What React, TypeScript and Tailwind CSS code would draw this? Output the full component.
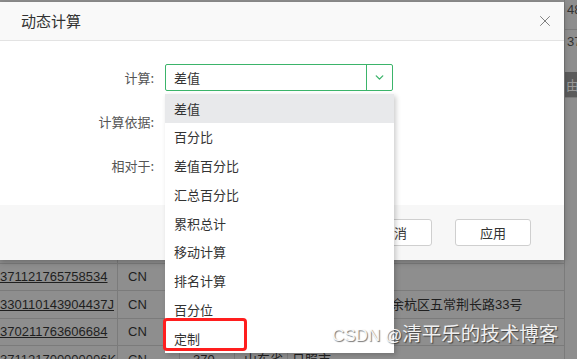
import { ChevronDown, X } from 'lucide-react';

const rows = [
  { id: '370211763600012', cn: 'CN', code: '370', prov: '山东省', city: '青岛市', addr: '' },
  { id: '371121765758534', cn: 'CN', code: '371', prov: '山东省', city: '日照市', addr: '' },
  { id: '330110143904437J', cn: 'CN', code: '330', prov: '浙江省', city: '杭州市', addr: '杭州市余杭区五常荆长路33号' },
  { id: '370211763606684', cn: 'CN', code: '370', prov: '山东省', city: '青岛市', addr: '' },
  { id: '371121700000006K', cn: 'CN', code: '370', prov: '山东省', city: '日照市', addr: '' },
];

const options = ['差值', '百分比', '差值百分比', '汇总百分比', '累积总计', '移动计算', '排名计算', '百分位', '定制'];

const font = "font-['Noto_Sans_CJK_SC','Noto_Sans',sans-serif]";

export default function App() {
  return (
    <div className={`relative w-[577px] h-[359px] overflow-hidden bg-[#8e8e8e] ${font}`}>
      {/* 背景表格 */}
      <div className="flex h-full">
        <div className="flex-1 flex flex-col pt-[236px]">
          {rows.map((r) => (
            <div key={r.id} className="flex h-[27.6px] shrink-0 border-b border-[#7b7b7b] text-[13px] text-[#1f1f1f] font-['Liberation_Sans','Noto_Sans_CJK_SC',sans-serif]">
              <div className="w-[118px] shrink-0 border-r border-[#7b7b7b] flex items-center underline overflow-hidden whitespace-nowrap">{r.id}</div>
              <div className="w-[62px] shrink-0 border-r border-[#7b7b7b] flex items-center pl-[10px]">{r.cn}</div>
              <div className="w-[55px] shrink-0 border-r border-[#7b7b7b] flex items-center pl-[13px] overflow-hidden">{r.code}</div>
              <div className="w-[53px] shrink-0 border-r border-[#7b7b7b] flex items-center pl-[9px] overflow-hidden whitespace-nowrap">{r.prov}</div>
              <div className="w-[52px] shrink-0 flex items-center pl-[4px] overflow-hidden whitespace-nowrap">{r.city}</div>
              <div className="flex-1 flex items-center pl-[12px] whitespace-nowrap overflow-hidden">{r.addr}</div>
            </div>
          ))}
        </div>
        <div className="w-[13px] shrink-0 border-l border-[#7b7b7b] flex flex-col text-[13px] text-[#333] font-['Liberation_Sans',sans-serif] overflow-hidden">
          <div className="h-[30px] shrink-0 border-b border-[#7b7b7b] pl-[2px] pt-[2px] leading-[16px] whitespace-nowrap">48</div>
          <div className="h-[30px] shrink-0 pl-[2px] pt-[4px] leading-[16px] whitespace-nowrap">37</div>
          <div className="h-[12px] shrink-0" />
          <div className="h-[25px] shrink-0 bg-[#5b5b5b] text-[#9a9a9a] pl-[1px] flex items-center font-['Noto_Sans_CJK_SC',sans-serif]">由</div>
          <div className="flex-1 border-t border-[#7b7b7b]" />
        </div>
      </div>

      {/* 弹窗 */}
      <div className="absolute left-0 top-[2px] w-[564px] h-[258px] flex flex-col bg-white shadow-[0_2px_6px_rgba(0,0,0,0.25)]">
        <div className="h-[39px] shrink-0 flex items-center justify-between pl-[21px] pr-[10px] bg-[#f9f9f9] border-b border-[#e3e3e3]">
          <span className="text-[15px] text-[#333]">动态计算</span>
          <X size={18} strokeWidth={1.1} className="text-[#666]" />
        </div>
        <div className="flex-1 flex flex-col gap-[17px] pt-[23px] text-[13px] text-[#555]">
          <div className="flex items-center h-[27px]">
            <div className="w-[154px] text-right">计算:</div>
            <div className="ml-[11px] w-[228px] h-[27px] flex border border-[#3bb46a] rounded-[2px]">
              <div className="flex-1 flex items-center pl-[8px] text-[#333]">差值</div>
              <div className="w-[26px] border-l border-[#3bb46a] flex items-center justify-center">
                <ChevronDown size={13} strokeWidth={2.5} className="text-[#3bb46a]" />
              </div>
            </div>
          </div>
          <div className="flex items-center h-[27px]">
            <div className="w-[154px] text-right">计算依据:</div>
          </div>
          <div className="flex items-center h-[27px]">
            <div className="w-[154px] text-right">相对于:</div>
          </div>
        </div>
        <div className="h-[55px] shrink-0 bg-[#f7f7f7] flex justify-end items-start gap-[23px] pt-[14px] pr-[33px]">
          <button className="w-[76px] h-[27px] bg-white border border-[#cfcfcf] rounded-[3px] text-[13px] text-[#333]">取消</button>
          <button className="w-[76px] h-[27px] bg-white border border-[#cfcfcf] rounded-[3px] text-[13px] text-[#333]">应用</button>
        </div>
      </div>

      {/* 下拉列表 */}
      <div className="absolute left-[165px] top-[94px] w-[229px] bg-white shadow-[2px_2px_5px_rgba(0,0,0,0.2)] text-[13px] text-[#333]">
        {options.map((o, i) => (
          <div key={o} className={`h-[28.75px] flex items-center pl-[9px] ${i === 0 ? 'bg-[#e8e9eb]' : ''}`}>
            {o}
          </div>
        ))}
      </div>

      {/* 红框 */}
      <div className="absolute left-[163px] top-[318px] w-[84px] h-[33px] border-[3px] border-[#ff1e1e] rounded-[4px]" />

      {/* 水印 */}
      <div className="absolute left-[332px] top-[320px] text-[19.5px] leading-[26px] text-white/90 whitespace-nowrap [text-shadow:1px_1px_1px_rgba(0,0,0,0.55)]">
        <span className="font-['Liberation_Sans',sans-serif] text-[17px]">CSDN @</span>清平乐的技术博客
      </div>
    </div>
  );
}
